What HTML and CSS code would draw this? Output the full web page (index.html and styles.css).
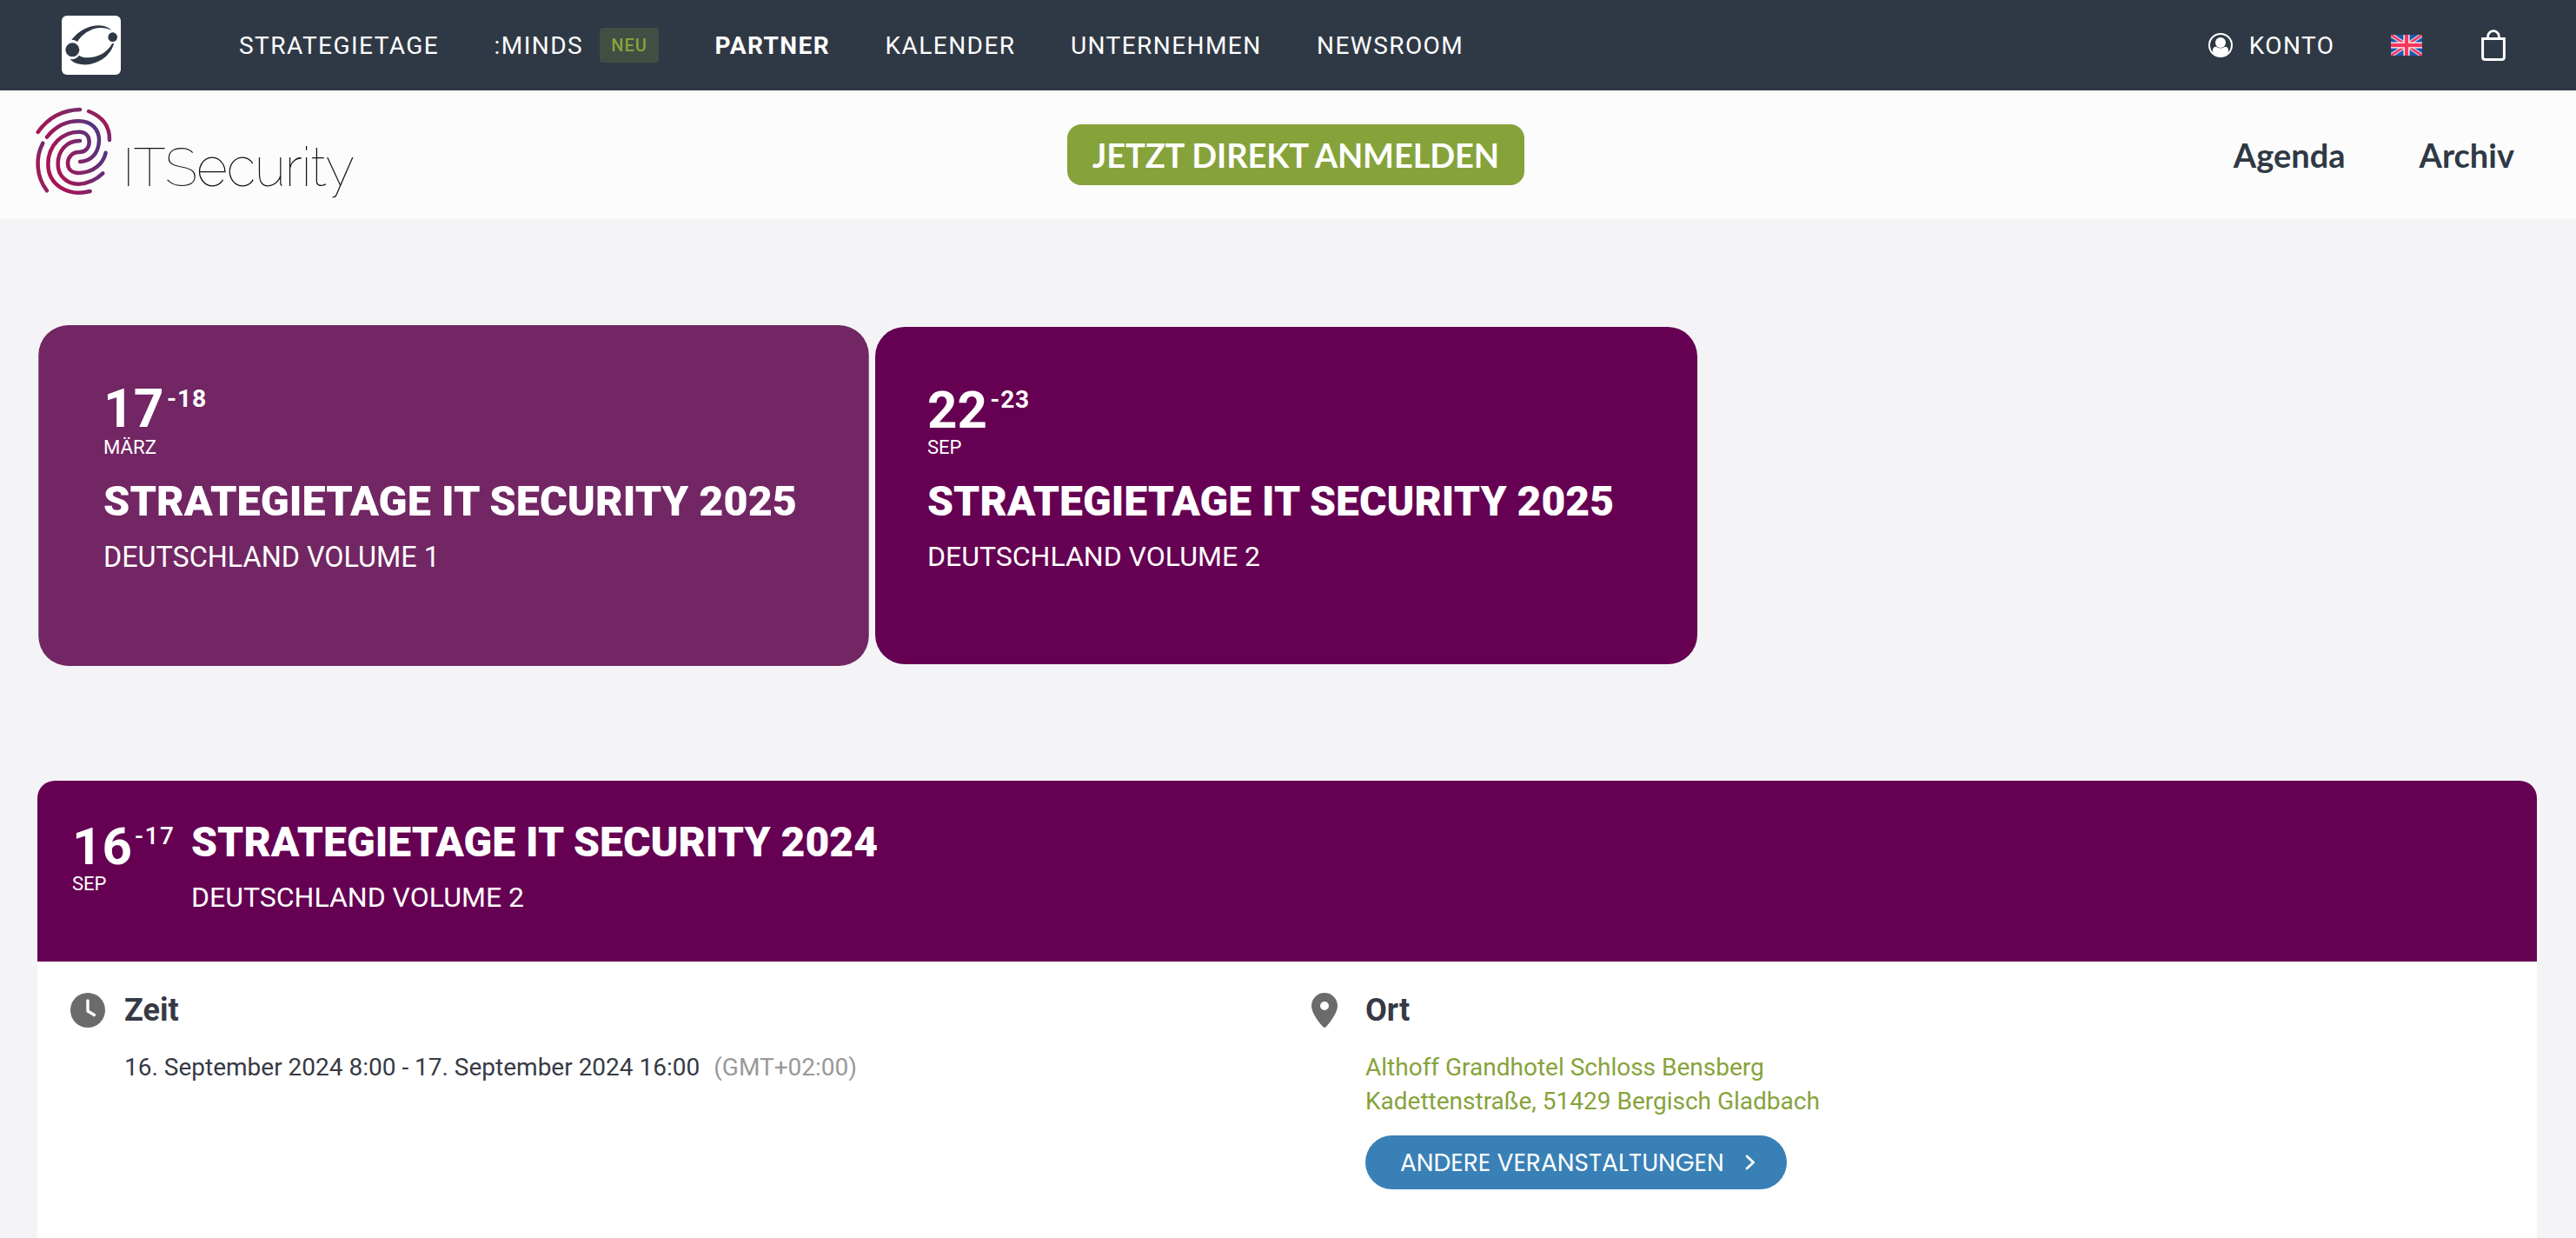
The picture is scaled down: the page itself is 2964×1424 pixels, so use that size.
FILE: index.html
```html
<!DOCTYPE html>
<html lang="de">
<head>
<meta charset="utf-8">
<title>Strategietage IT Security</title>
<link rel="stylesheet" href="styles.css">
</head>
<body>
<header class="topbar">
  <a class="brand">
    <svg viewBox="0 0 204 204" width="68" height="68">
      <rect width="204" height="204" rx="18" fill="#fff"/>
      <g fill="#2f3945">
        <circle cx="37" cy="118" r="24"/>
        <circle cx="176" cy="74" r="16"/>
        <path d="M34 83C62 48 98 33 130 34C150 35 165 42 171 51C160 44 146 41 130 42C100 44 69 65 54 90C48 85 41 83 34 83Z"/>
        <path d="M180 96C170 140 120 172 74 169C52 167 36 160 29 150C42 152 53 147 60 137C72 146 92 147 114 142C142 135 162 118 174 96Z"/>
      </g>
    </svg>
  </a>
  <nav class="nav">
    <a>STRATEGIETAGE</a>
    <a class="with-badge">:MINDS<span class="badge">NEU</span></a>
    <a class="active">PARTNER</a>
    <a>KALENDER</a>
    <a>UNTERNEHMEN</a>
    <a>NEWSROOM</a>
  </nav>
  <div class="tools">
    <a class="account">
      <svg viewBox="0 0 28 28" width="28" height="28">
        <circle cx="14" cy="14" r="13" fill="none" stroke="#fff" stroke-width="2"/>
        <circle cx="14" cy="11" r="6" fill="#fff"/>
        <path d="M5 20C5 16.5 7 15.6 9 15.8C12 18 16 18 19 15.8C21 15.6 23 16.5 23 20L23 22C18 28 10 28 5 22Z" fill="#fff"/>
      </svg>
      KONTO
    </a>
    <svg class="flag" viewBox="0 0 36 24" width="36" height="24">
      <rect width="36" height="24" fill="#1b56ad"/>
      <path d="M0 0L36 24M36 0L0 24" stroke="#c9cfe6" stroke-width="5"/>
      <path d="M0 0L36 24M36 0L0 24" stroke="#f5385c" stroke-width="2.6"/>
      <path d="M18 0V24M0 12H36" stroke="#fff" stroke-width="7"/>
      <path d="M18 0V24M0 12H36" stroke="#f5385c" stroke-width="4.4"/>
    </svg>
    <svg viewBox="0 0 28 36" width="28" height="36" fill="none" stroke="#fff">
      <path d="M1.6 10.5H26.4V31.5Q26.4 34.5 23.4 34.5H4.6Q1.6 34.5 1.6 31.5Z" stroke-width="3"/>
      <path d="M7.6 10V8A6.4 6.4 0 0 1 20.4 8V10" stroke-width="2.8"/>
    </svg>
  </div>
</header>

<div class="subbar">
  <a class="event-logo">
    <svg viewBox="0 0 330 375" width="110" height="125">
      <defs>
        <linearGradient id="ink" gradientUnits="userSpaceOnUse" x1="100" y1="250" x2="275" y2="180">
          <stop offset="0" stop-color="#a81453"/>
          <stop offset="1" stop-color="#533580"/>
        </linearGradient>
        <linearGradient id="edge" gradientUnits="userSpaceOnUse" x1="40" y1="127" x2="215" y2="20">
          <stop offset="0" stop-color="#a81453"/>
          <stop offset="1" stop-color="#6b2f74"/>
        </linearGradient>
        <linearGradient id="side" gradientUnits="userSpaceOnUse" x1="50" y1="330" x2="70" y2="150">
          <stop offset="0" stop-color="#8f2460"/>
          <stop offset=".5" stop-color="#a01a55"/>
          <stop offset="1" stop-color="#6b2f74"/>
        </linearGradient>
        <linearGradient id="corner" gradientUnits="userSpaceOnUse" x1="210" y1="54" x2="295" y2="160">
          <stop offset="0" stop-color="#8a2563"/>
          <stop offset=".6" stop-color="#a01a55"/>
          <stop offset="1" stop-color="#6b2f74"/>
        </linearGradient>
      </defs>
      <g fill="none" stroke="url(#ink)" stroke-width="13.5" stroke-linecap="round">
        <path stroke="url(#edge)" d="M41 126C78 73 126 50 186 48"/>
        <path stroke="url(#corner)" d="M216 54C268 74 289 108 288 153"/>
        <path stroke="url(#side)" d="M58 164C32 212 34 279 72 328"/>
        <path d="M72 143C100 108 138 88 181 88C228 88 253 118 252 156C250 198 226 226 186 228"/>
        <path d="M221 330C142 350 76 306 76 236C76 172 124 125 183 125C206 125 218 140 218 160C218 181 204 195 182 195C160 195 144 212 144 233C144 255 160 267 182 267C232 266 266 236 275 197"/>
        <path d="M186 156C140 155 110 190 110 236C110 276 140 305 180 305C213 304 240 292 265 268"/>
      </g>
    </svg>
    <span>ITSecurity</span>
  </a>
  <a class="cta">JETZT DIREKT ANMELDEN</a>
  <nav class="subnav">
    <a>Agenda</a>
    <a>Archiv</a>
  </nav>
</div>

<main>
  <section class="cards">
    <article class="card hovered">
      <div class="day"><b>17</b><sup>-18</sup></div>
      <div class="month">MÄRZ</div>
      <h2>STRATEGIETAGE IT SECURITY 2025</h2>
      <p class="place">DEUTSCHLAND VOLUME 1</p>
    </article>
    <article class="card">
      <div class="day"><b>22</b><sup>-23</sup></div>
      <div class="month">SEP</div>
      <h2>STRATEGIETAGE IT SECURITY 2025</h2>
      <p class="place">DEUTSCHLAND VOLUME 2</p>
    </article>
  </section>

  <section class="detail">
    <div class="detail-head">
      <div class="date">
        <div class="day"><b>16</b><sup>-17</sup></div>
        <div class="month">SEP</div>
      </div>
      <div class="detail-title">
        <h2>STRATEGIETAGE IT SECURITY 2024</h2>
        <p class="place">DEUTSCHLAND VOLUME 2</p>
      </div>
    </div>
    <div class="detail-body">
      <div class="info">
        <svg viewBox="0 0 40 40" width="40" height="40">
          <circle cx="20" cy="20" r="20" fill="#6b6b6b"/>
          <path d="M20 9V21L27.5 25.5" fill="none" stroke="#fff" stroke-width="3.4" stroke-linecap="round" stroke-linejoin="round"/>
        </svg>
        <div>
          <h3>Zeit</h3>
          <p>16. September 2024 8:00 - 17. September 2024 16:00<span class="zone">(GMT+02:00)</span></p>
        </div>
      </div>
      <div class="info info-place">
        <svg viewBox="0 0 30 40" width="30" height="40">
          <path fill="#6b6b6b" fill-rule="evenodd" d="M15 0A15 15 0 0 1 30 15C30 23 22 33 16.8 39.1Q15 40.8 13.2 39.1C8 33 0 23 0 15A15 15 0 0 1 15 0ZM15 10A5 5 0 1 0 15 20A5 5 0 1 0 15 10Z"/>
        </svg>
        <div>
          <h3>Ort</h3>
          <p class="address">Althoff Grandhotel Schloss Bensberg<br>Kadettenstraße, 51429 Bergisch Gladbach</p>
          <a class="more">ANDERE VERANSTALTUNGEN
            <svg viewBox="0 0 12 18" width="12" height="18"><path d="M2 2L9.5 9L2 16" fill="none" stroke="#fff" stroke-width="2.8" stroke-linecap="round" stroke-linejoin="round"/></svg>
          </a>
        </div>
      </div>
    </div>
  </section>
</main>
</body>
</html>
```
FILE: styles.css
```css
* {
  box-sizing: border-box;
}

body {
  margin: 0;
  background: #f4f4f7;
  color: #363a44;
  font-family: Roboto, "Liberation Sans", sans-serif;
  font-size: 28px;
}

h2, h3, p {
  margin: 0;
}

svg {
  display: block;
  flex: none;
}

/* Top navigation */
.topbar {
  display: flex;
  align-items: center;
  height: 104px;
  padding: 0 81px 0 71px;
  background: #2f3945;
  color: #fff;
  letter-spacing: 1.45px;
}

.nav {
  display: flex;
  align-items: center;
  gap: 63.4px;
  margin-left: 136px;
}

.with-badge {
  display: flex;
  align-items: center;
}

.badge {
  width: 68px;
  height: 40px;
  margin: 0 1px 0 19px;
  border-radius: 4px;
  background: #414e44;
  color: #86a33b;
  font-size: 20px;
  font-weight: 500;
  line-height: 41px;
  letter-spacing: 1px;
  text-align: center;
}

.active {
  font-weight: 700;
}

.tools {
  display: flex;
  align-items: center;
  margin-left: auto;
}

.account {
  display: flex;
  align-items: center;
  gap: 19px;
}

.flag {
  margin: 0 68px 0 64.5px;
}

/* Event bar */
.subbar {
  display: grid;
  grid-template-columns: 1198px 526px 1fr;
  align-items: center;
  height: 148px;
  background: #fcfcfc;
  padding: 0 71px 0 30px;
  color: #2f3945;
  font: 700 38px/46px Lato, "Noto Sans", sans-serif;
}

.event-logo {
  display: flex;
  align-self: start;
  padding-top: 6px;
  color: #111;
  font: 100 62px/70px Raleway, Roboto, sans-serif;
}

.event-logo span {
  margin: 48px 0 0 1px;
  letter-spacing: -1px;
}

.cta {
  height: 70px;
  border-radius: 16px;
  background: #86a33b;
  color: #fff;
  line-height: 71px;
  text-align: center;
  letter-spacing: -0.1px;
}

.subnav {
  display: flex;
  justify-content: flex-end;
  gap: 85px;
}

/* Upcoming events */
.cards {
  display: grid;
  grid-template-columns: 946px 946px;
  gap: 12px;
  padding: 124px 0 0 49px;
}

.card {
  height: 388px;
  padding: 65.5px 60px 0;
  border-radius: 34px;
  background: #650052;
  color: #fff;
}

.hovered {
  padding-left: 74px;
  background: #722663;
  transform: scale(1.01);
}

.day {
  display: flex;
  height: 60px;
  font-size: 60px;
  line-height: 60px;
}

.day sup {
  margin: 4px 0 0 3.5px;
  font-size: 28px;
  font-weight: 700;
  line-height: 28px;
  letter-spacing: 0.8px;
}

.month {
  font-size: 22px;
  line-height: 26px;
}

h2 {
  font-size: 48px;
  font-weight: 900;
  line-height: 56px;
  letter-spacing: 0.05px;
  white-space: nowrap;
}

.card h2 {
  margin-top: 21px;
}

.place {
  margin-top: 15px;
  font-size: 32px;
  line-height: 40px;
}

/* Event detail */
.detail {
  height: 526px;
  margin: 134px 45px 0 43px;
  border-radius: 20px 20px 0 0;
  overflow: hidden;
  background: #fff;
}

.detail-head {
  display: flex;
  height: 208px;
  padding: 42.5px 40px 0;
  background: #650052;
  color: #fff;
}

.date {
  width: 137px;
  padding-top: 3px;
}

.date sup {
  font-weight: 500;
  letter-spacing: 1.6px;
}

.detail-body {
  display: grid;
  grid-template-columns: 1428px 1fr;
  padding: 34px 38px;
}

.info {
  display: flex;
  gap: 22px;
  line-height: 39px;
}

.info > svg {
  margin-top: 2px;
}

.info-place {
  gap: 32px;
}

h3 {
  margin-bottom: 24px;
  font-size: 36px;
  line-height: 44px;
}

.zone {
  margin-left: 16px;
  color: #999;
}

.address {
  color: #86a33b;
}

.more {
  display: flex;
  align-items: center;
  gap: 24px;
  width: 485px;
  height: 62px;
  margin-top: 20px;
  padding-left: 40px;
  border-radius: 31px;
  background: #3980b6;
  color: #fff;
  font-family: Poppins, Lato, sans-serif;
}
```
